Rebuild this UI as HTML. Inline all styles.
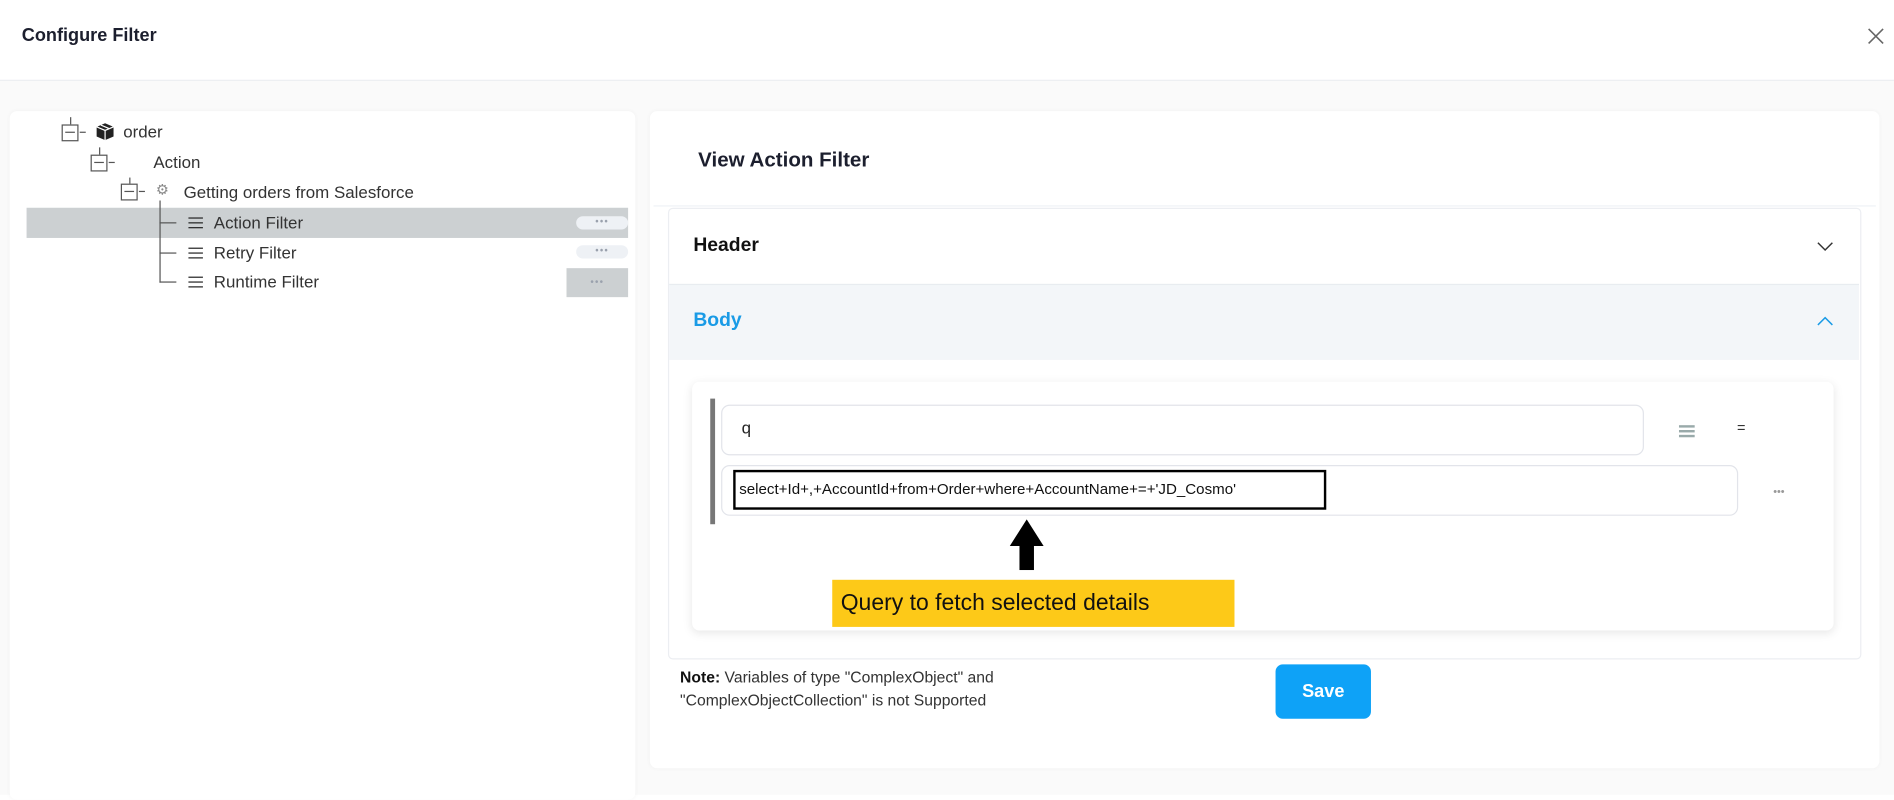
<!DOCTYPE html>
<html><head><meta charset="utf-8"><style>
html,body{margin:0;padding:0;width:1894px;height:795px;overflow:hidden;background:#fff;font-family:"Liberation Sans",sans-serif;}
#s{position:absolute;left:0;top:0;width:1568px;height:658px;transform:scale(1.2079);transform-origin:0 0;background:#fafafa;}
.a{position:absolute;}
.t{color:#333;font-size:14px;}
.pill{position:absolute;width:43px;height:11px;border-radius:6px;background:#eef1f5;color:#9aa1ad;font-size:8px;text-align:center;line-height:10px;letter-spacing:1px;}
.box{position:absolute;width:12px;height:12px;border:1px solid #555;background:#fff;}
.box:after{content:"";position:absolute;left:2px;right:2px;top:5px;height:1px;background:#555;}
.ic{position:absolute;width:12px;height:1px;background:#222;box-shadow:0 4px 0 #222,0 8px 0 #222;}
</style></head><body><div id="s">
<div class="a" style="left:0;top:0;width:1568px;height:66px;background:#fff;border-bottom:1px solid #eceef2"></div>
<div class="a" style="left:18px;top:21px;font-size:15px;font-weight:bold;color:#1c1f2e">Configure Filter</div>
<svg class="a" style="left:1546px;top:23px" width="14" height="14"><path d="M1 1L13 13M13 1L1 13" stroke="#666" stroke-width="1.3"/></svg>

<div class="a" style="left:8px;top:92px;width:518px;height:570px;background:#fff;border-radius:6px;box-shadow:0 0 4px rgba(0,0,0,.04)"></div>
<div class="a" style="left:58px;top:97px;width:1px;height:6px;background:#555"></div>
<div class="box" style="left:51px;top:103px"></div><div class="a" style="left:66px;top:109px;width:5px;height:1px;background:#555"></div>
<svg class="a" style="left:79px;top:101px" width="16" height="16" viewBox="0 0 16 16"><path d="M8 1L15 4V12L8 15L1 12V4Z" fill="#222"/><path d="M1 4L8 7L15 4M8 7V15M4.5 2.5L11.5 5.5" stroke="#fff" stroke-width="1" fill="none"/></svg>
<div class="a t" style="left:102px;top:101px">order</div>
<div class="a" style="left:82px;top:122px;width:1px;height:6px;background:#555"></div>
<div class="box" style="left:75px;top:128px"></div><div class="a" style="left:90px;top:134px;width:5px;height:1px;background:#555"></div>
<div class="a t" style="left:127px;top:126px">Action</div>
<div class="a" style="left:107px;top:147px;width:1px;height:6px;background:#555"></div>
<div class="box" style="left:100px;top:152px"></div><div class="a" style="left:115px;top:158px;width:5px;height:1px;background:#555"></div>
<div class="a" style="left:129px;top:150px;font-size:12px;color:#888">⚙</div>
<div class="a t" style="left:152px;top:151px">Getting orders from Salesforce</div>
<div class="a" style="left:22px;top:172px;width:498px;height:25px;background:#ccd0d2"></div>
<div class="a" style="left:132px;top:166px;width:1px;height:68px;background:#555"></div>
<div class="a" style="left:132px;top:184px;width:14px;height:1px;background:#555"></div>
<div class="a" style="left:132px;top:209px;width:14px;height:1px;background:#555"></div>
<div class="a" style="left:132px;top:233px;width:14px;height:1px;background:#555"></div>
<div class="ic" style="left:156px;top:180px"></div>
<div class="a t" style="left:177px;top:176px">Action Filter</div>
<div class="ic" style="left:156px;top:205px"></div>
<div class="a t" style="left:177px;top:201px">Retry Filter</div>
<div class="ic" style="left:156px;top:229px"></div>
<div class="a t" style="left:177px;top:225px">Runtime Filter</div>
<div class="pill" style="left:477px;top:179px">•••</div>
<div class="pill" style="left:477px;top:203px">•••</div>
<div class="a" style="left:469px;top:222px;width:51px;height:24px;background:#ccd0d2;color:#9aa1ad;font-size:8px;text-align:center;line-height:24px;letter-spacing:1px">•••</div>

<div class="a" style="left:538px;top:92px;width:1018px;height:544px;background:#fff;border-radius:6px;box-shadow:0 0 4px rgba(0,0,0,.04)"></div>
<div class="a" style="left:578px;top:123px;font-size:17px;font-weight:bold;color:#1c1f2e">View Action Filter</div>
<div class="a" style="left:541px;top:170px;width:1012px;height:1px;background:#eef2f6"></div>
<div class="a" style="left:553px;top:172px;width:986px;height:372px;border:1px solid #eceef2;border-radius:4px;background:#fff"></div>
<div class="a" style="left:574px;top:195px;font-size:16px;font-weight:bold;color:#111">Header</div>
<svg class="a" style="left:1504px;top:199px" width="14" height="10"><path d="M1 2L7 8L13 2" stroke="#333" fill="none" stroke-width="1.2"/></svg>
<div class="a" style="left:554px;top:235px;width:985px;height:62px;background:#f3f6f9;border-top:1px solid #e8ecf0"></div>
<div class="a" style="left:574px;top:257px;font-size:16px;font-weight:bold;color:#1a9be6">Body</div>
<svg class="a" style="left:1504px;top:261px" width="14" height="10"><path d="M1 8L7 2L13 8" stroke="#1a9be6" fill="none" stroke-width="1.2"/></svg>
<div class="a" style="left:573px;top:316px;width:945px;height:206px;background:#fff;border-radius:6px;box-shadow:0 2px 8px rgba(0,0,0,.1)"></div>
<div class="a" style="left:588px;top:330px;width:4px;height:104px;background:#777"></div>
<div class="a" style="left:597px;top:335px;width:762px;height:40px;border:1px solid #e2e4ea;border-radius:7px"></div>
<div class="a t" style="left:614px;top:346px;color:#222">q</div>
<div class="a" style="left:1390px;top:352px;width:13px;height:2px;background:#9aa;box-shadow:0 4px 0 #9aa,0 8px 0 #9aa"></div>
<div class="a" style="left:1438px;top:347px;font-size:12px;color:#333">=</div>
<div class="a" style="left:597px;top:385px;width:840px;height:40px;border:1px solid #e2e4ea;border-radius:7px"></div>
<div class="a" style="left:607px;top:389px;width:491px;height:33px;border:2px solid #000;box-sizing:border-box;font-size:12.5px;color:#111;line-height:29px;padding-left:3px;white-space:nowrap">select+Id+,+AccountId+from+Order+where+AccountName+=+'JD_Cosmo'</div>
<div class="a" style="left:1468px;top:402px;font-size:9px;color:#999">•••</div>
<svg class="a" style="left:834px;top:428px" width="32" height="44"><path d="M16 2L30 24H22V44H10V24H2Z" fill="#000"/></svg>
<div class="a" style="left:689px;top:480px;width:333px;height:39px;background:#fdc918"></div>
<div class="a" style="left:696px;top:489px;font-size:19px;color:#111">Query to fetch selected details</div>
<div class="a" style="left:563px;top:551px;font-size:13px;color:#333;line-height:19px"><b style="color:#111">Note:</b> Variables of type "ComplexObject" and<br>"ComplexObjectCollection" is not Supported</div>
<div class="a" style="left:1056px;top:550px;width:79px;height:45px;background:#0ea2f7;border-radius:6px;color:#fff;font-weight:bold;font-size:15px;text-align:center;line-height:45px">Save</div>
</div></body></html>
